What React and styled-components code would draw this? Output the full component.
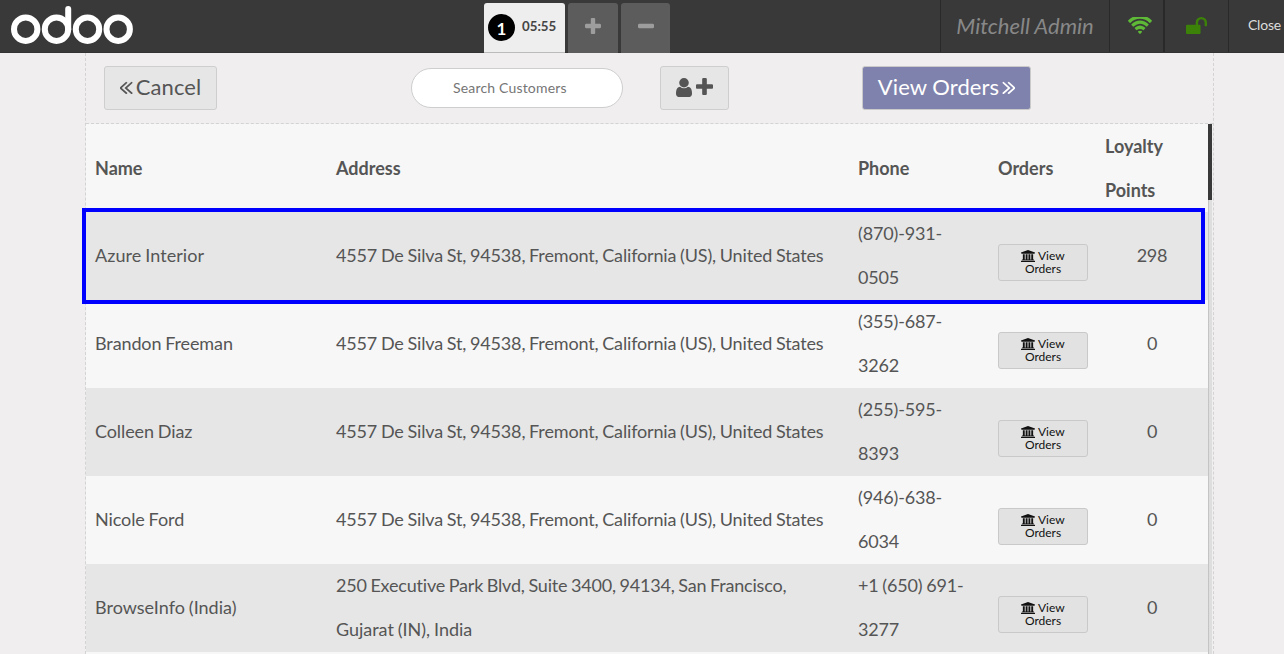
import React from 'react';
import styled, { createGlobalStyle } from 'styled-components';

const GlobalStyle = createGlobalStyle`
  *, *::before, *::after { box-sizing: border-box; }
  body {
    margin: 0;
    overflow: hidden;
    background: #f0eeee;
    color: #555;
    font-family: Lato, "Liberation Sans", sans-serif;
    font-variant-ligatures: none;
  }
  button, input { font-family: inherit; }
`;

const glyphs = {
  back: ['480 400 940 1130', 'M1011 1376q0 13-10 23l-50 50q-10 10-23 10t-23-10l-466-466q-10-10-10-23t10-23l466-466q10-10 23-10t23 10l50 50q10 10 10 23t-10 23l-393 393 393 393q10 10 10 23zm384 0q0 13-10 23l-50 50q-10 10-23 10t-23-10l-466-466q-10-10-10-23t10-23l466-466q10-10 23-10t23 10l50 50q10 10 10 23t-10 23l-393 393 393 393q10 10 10 23z'],
  plus: ['192 128 1408 1408', 'M1600 736v192q0 40-28 68t-68 28h-416v416q0 40-28 68t-68 28h-192q-40 0-68-28t-28-68v-416h-416q-40 0-68-28t-28-68v-192q0-40 28-68t68-28h416v-416q0-40 28-68t68-28h192q40 0 68 28t28 68v416h416q40 0 68 28t28 68z'],
  minus: ['192 128 1408 1408', 'M1600 736v192q0 40-28 68t-68 28h-1216q-40 0-68-28t-28-68v-192q0-40 28-68t68-28h1216q40 0 68 28t28 68z'],
  user: ['256 128 1280 1536', 'M1536 1399q0 109-62.5 187t-150.5 78h-854q-88 0-150.5-78t-62.5-187q0-85 8.5-160.5t31.5-152 58.5-131 94-89 134.5-34.5q131 128 313 128t313-128q76 0 134.5 34.5t94 89 58.5 131 31.5 152 8.5 160.5zm-256-887q0 159-112.5 271.5t-271.5 112.5-271.5-112.5-112.5-271.5 112.5-271.5 271.5-112.5 271.5 112.5 112.5 271.5z'],
  wifi: ['42 256 1964 1267', 'M1024 1523q-20 0-93-73.5t-73-93.5q0-32 62.5-54t103.5-22 103.5 22 62.5 54q0 20-73 93.5t-93 73.5zm270-271q-2 0-40-25t-101.5-50-128.5-25-128.5 25-101 50-40.5 25q-18 0-93.5-75t-75.5-93q0-13 10-23 78-77 196-121t233-44 233 44 196 121q10 10 10 23 0 18-75.5 93t-93.5 75zm273-272q-11 0-23-8-136-105-252-154.5t-268-49.5q-85 0-170.5 22t-149 53-113.5 62-79 53-31 22q-17 0-92-75t-75-93q0-12 10-22 132-132 320-205t380-73 380 73 320 205q10 10 10 22 0 18-75 93t-92 75zm271-271q-11 0-22-9-179-157-371.5-236.5t-420.5-79.5-420.5 79.5-371.5 236.5q-11 9-22 9-17 0-92.5-75t-75.5-93q0-13 10-23 187-186 445-288t527-102 527 102 445 288q10 10 10 23 0 18-75.5 93t-92.5 75z'],
  unlock: ['64 128 1664 1408', 'M1728 576v256q0 26-19 45t-45 19h-64q-26 0-45-19t-19-45v-256q0-106-75-181t-181-75-181 75-75 181v192h96q40 0 68 28t28 68v576q0 40-28 68t-68 28h-960q-40 0-68-28t-28-68v-576q0-40 28-68t68-28h672v-192q0-185 131.5-316.5t316.5-131.5 316.5 131.5 131.5 316.5z'],
  bank: ['0 0 1920 1792', 'M960 0l960 384v128h-128q0 26-20.5 45t-48.5 19h-1526q-28 0-48.5-19t-20.5-45h-128v-128zm-704 640h256v768h128v-768h256v768h128v-768h256v768h128v-768h256v768h59q28 0 48.5 19t20.5 45v64h-1664v-64q0-26 20.5-45t48.5-19h59v-768zm1595 960q28 0 48.5 19t20.5 45v128h-1920v-128q0-26 20.5-45t48.5-19h1782z'],
};

const Svg = styled.svg`
  display: ${(p) => (p.$inline ? 'inline-block' : 'block')};
  flex: none;
  fill: currentColor;
  vertical-align: -2px;
  transform: ${(p) => (p.$flip ? 'scaleX(-1)' : 'none')};
`;

function Icon({ name, width, height, inline, flip }) {
  const [box, d] = glyphs[name];
  return (
    <Svg viewBox={box} width={width} height={height} preserveAspectRatio="none" $inline={inline} $flip={flip} aria-hidden="true">
      <path d={d} />
    </Svg>
  );
}

const Page = styled.div`
  height: 654px;
  display: flex;
  flex-direction: column;
  overflow: hidden;
`;

const TopBar = styled.header`
  flex: none;
  height: 53px;
  display: flex;
  background: #393939;
  border-bottom: 1px solid #333;
`;

const Brand = styled.div`
  width: 484px;
  padding: 6px 0 0 11px;
  svg { display: block; }
`;

const OrderTabs = styled.nav`
  flex: 1;
  display: flex;
  gap: 3px;
  padding-top: 3px;
`;

const OrderTab = styled.button`
  width: 81px;
  height: 50px;
  padding: 0 0 3px 4px;
  display: flex;
  align-items: center;
  gap: 7px;
  border: 0;
  border-bottom: 1px solid #bbb;
  border-radius: 3px 3px 0 0;
  background: #eee;
  color: #444;
  font-size: 13.3px;
  font-weight: 700;
`;

const Sequence = styled.span`
  width: 27px;
  height: 27px;
  margin-top: 3px;
  border-radius: 50%;
  background: #000;
  color: #fff;
  font-size: 17px;
  line-height: 29px;
  text-align: center;
`;

const TabAction = styled.button`
  width: ${(p) => p.$width}px;
  height: 50px;
  padding: 0 0 4px;
  display: flex;
  align-items: center;
  justify-content: center;
  border: 0;
  border-radius: 3px 3px 0 0;
  background: #5c5c5c;
  color: #9d9d9d;
`;

const StatusArea = styled.div`
  display: flex;
`;

const StatusItem = styled.div`
  width: ${(p) => p.$width}px;
  height: 52px;
  padding: 0 0 2px ${(p) => p.$indent || 0}px;
  display: flex;
  align-items: center;
  justify-content: center;
  border-left: ${(p) => p.$rule || 1}px solid #292929;
  color: ${(p) => p.$color};
`;

const UserName = styled.span`
  font-size: 22px;
  font-style: italic;
  white-space: nowrap;
`;

const CloseLabel = styled.span`
  padding: 0 0 2px 16px;
  font-size: 14px;
  letter-spacing: -0.2px;
`;

const Screen = styled.main`
  flex: 1;
  min-height: 0;
  width: 1129px;
  margin-left: 85px;
  display: flex;
  flex-direction: column;
  border: dashed #d3d3d3;
  border-width: 0 1px;
`;

const Actions = styled.section`
  flex: none;
  height: 71px;
  padding: 13px 0 0 18px;
  display: flex;
  align-items: flex-start;
  border-bottom: 1px dashed #d3d3d3;
`;

const ActionButton = styled.button`
  width: ${(p) => p.$width}px;
  height: 44px;
  margin-left: ${(p) => p.$gap || 0}px;
  padding: 0 0 1px;
  display: flex;
  align-items: center;
  justify-content: center;
  gap: ${(p) => p.$inner}px;
  border: 1px solid ${(p) => (p.$primary ? '#cacaca' : '#cecece')};
  border-radius: 3px;
  background: ${(p) => (p.$primary ? '#7f82ac' : '#e6e6e6')};
  color: ${(p) => (p.$primary ? '#fff' : '#555')};
  font-size: 22px;
`;

const ButtonLabel = styled.span`
  padding-bottom: 2px;
  letter-spacing: 0.08px;
`;

const Search = styled.input`
  width: 212px;
  height: 40px;
  margin: 2px 0 0 194px;
  padding: 0 20px 2px 41px;
  border: 1px solid #cecece;
  border-radius: 20px;
  background: #fff;
  font-size: 14px;
  letter-spacing: 0.18px;
  &::placeholder { color: #757575; opacity: 1; }
`;

const ListArea = styled.section`
  flex: 1;
  min-height: 0;
  display: flex;
`;

const CustomerList = styled.div`
  width: 1122px;
`;

const ScrollTrack = styled.div`
  width: 4px;
  background: #dedede;
  border-left: 1px solid #c4c4c4;
`;

const ScrollThumb = styled.div`
  width: 4px;
  height: 76px;
  margin-left: -1px;
  background: #393939;
`;

const Row = styled.div`
  position: relative;
  height: 88px;
  display: grid;
  grid-template-columns: 241px 522px 140px 107px 112px;
  grid-template-rows: 88px;
  align-items: center;
  background: ${(p) => (p.$shaded ? '#e6e6e6' : '#f7f7f7')};
  font-size: 18px;
  line-height: 44px;
`;

const HeadCell = styled.div`
  padding-left: 9px;
  font-weight: 700;
  white-space: pre-line;
`;

const Cell = styled.div`
  padding: 0 0 2px ${(p) => (p.$center ? 0 : 9)}px;
  text-align: ${(p) => (p.$center ? 'center' : 'left')};
`;

const Line = styled.div`
  letter-spacing: ${(p) => p.$tracking}px;
  word-spacing: -0.7px;
  white-space: nowrap;
`;

const Highlight = styled.div`
  position: absolute;
  z-index: 1;
  inset: -4px 3px -4px -4px;
  border: 4px solid #0000ff;
`;

const ViewOrders = styled.button`
  display: block;
  width: 90px;
  height: 37px;
  margin-top: 14px;
  padding: 0;
  border: 1px solid #c9c9c9;
  border-radius: 3px;
  background: #e2e2e2;
  color: #111;
  font-size: 12px;
  line-height: 13px;
`;

const deSilva = [['4557 De Silva St, 94538, Fremont, California (US), United States', -0.15]];
const browseInfo = [
  ['250 Executive Park Blvd, Suite 3400, 94134, San Francisco,', -0.2],
  ['Gujarat (IN), India', -0.02],
];
const customers = [
  { name: ['Azure Interior', 0.05], address: deSilva, phone: ['(870)-931-', '0505'], points: 298, selected: true },
  { name: ['Brandon Freeman', -0.11], address: deSilva, phone: ['(355)-687-', '3262'], points: 0 },
  { name: ['Colleen Diaz', -0.09], address: deSilva, phone: ['(255)-595-', '8393'], points: 0 },
  { name: ['Nicole Ford', -0.09], address: deSilva, phone: ['(946)-638-', '6034'], points: 0 },
  { name: ['BrowseInfo (India)', 0.01], address: browseInfo, phone: ['+1 (650) 691-', '3277'], points: 0 },
];

function Logo() {
  return (
    <svg width="124" height="40" viewBox="0 0 124 40" fill="none" stroke="#fff" strokeWidth="6" strokeLinecap="round" role="img" aria-label="odoo">
      <circle cx="14.7" cy="23.2" r="11.7" />
      <circle cx="45.5" cy="23.2" r="11.7" />
      <circle cx="76.5" cy="23.2" r="11.7" />
      <circle cx="107.2" cy="23.2" r="11.7" />
      <path d="M57.2 3V23.2" />
    </svg>
  );
}

export default function App() {
  return (
    <Page>
      <GlobalStyle />
      <TopBar>
        <Brand><Logo /></Brand>
        <OrderTabs>
          <OrderTab><Sequence>1</Sequence>05:55</OrderTab>
          <TabAction $width={50}><Icon name="plus" width={16} height={16} /></TabAction>
          <TabAction $width={49}><Icon name="minus" width={16} height={16} /></TabAction>
        </OrderTabs>
        <StatusArea>
          <StatusItem $width={169} $color="#888"><UserName>Mitchell Admin</UserName></StatusItem>
          <StatusItem $width={54} $color="#5eb937" $indent={6}><Icon name="wifi" width={24} height={17} /></StatusItem>
          <StatusItem $width={65} $rule={2} $color="#3c8208"><Icon name="unlock" width={21} height={17} /></StatusItem>
          <StatusItem $width={56} $color="#ddd"><CloseLabel>Close</CloseLabel></StatusItem>
        </StatusArea>
      </TopBar>
      <Screen>
        <Actions>
          <ActionButton $width={113} $inner={3}><Icon name="back" width={13} height={14} /><ButtonLabel>Cancel</ButtonLabel></ActionButton>
          <Search placeholder="Search Customers" />
          <ActionButton $width={69} $gap={37} $inner={4}>
            <Icon name="user" width={16} height={19} />
            <ButtonLabel><Icon name="plus" width={17} height={17} /></ButtonLabel>
          </ActionButton>
          <ActionButton $width={169} $gap={133} $inner={3} $primary><ButtonLabel>View Orders</ButtonLabel><Icon name="back" width={13} height={14} flip /></ActionButton>
        </Actions>
        <ListArea>
          <CustomerList>
            <Row>
              <HeadCell>Name</HeadCell>
              <HeadCell>Address</HeadCell>
              <HeadCell>Phone</HeadCell>
              <HeadCell>Orders</HeadCell>
              <HeadCell>{'Loyalty\nPoints'}</HeadCell>
            </Row>
            {customers.map((c, i) => (
              <Row key={c.name[0]} $shaded={i % 2 === 0}>
                <Cell><Line $tracking={c.name[1]}>{c.name[0]}</Line></Cell>
                <Cell>
                  {c.address.map(([text, tracking]) => <Line key={text} $tracking={tracking}>{text}</Line>)}
                </Cell>
                <Cell>
                  {c.phone.map((text) => <Line key={text} $tracking={-0.16}>{text}</Line>)}
                </Cell>
                <Cell>
                  <ViewOrders><Icon name="bank" width={14} height={12} inline /> View<br />Orders</ViewOrders>
                </Cell>
                <Cell $center><Line $tracking={-0.2}>{c.points}</Line></Cell>
                {c.selected && <Highlight />}
              </Row>
            ))}
            <Row />
          </CustomerList>
          <ScrollTrack><ScrollThumb /></ScrollTrack>
        </ListArea>
      </Screen>
    </Page>
  );
}
